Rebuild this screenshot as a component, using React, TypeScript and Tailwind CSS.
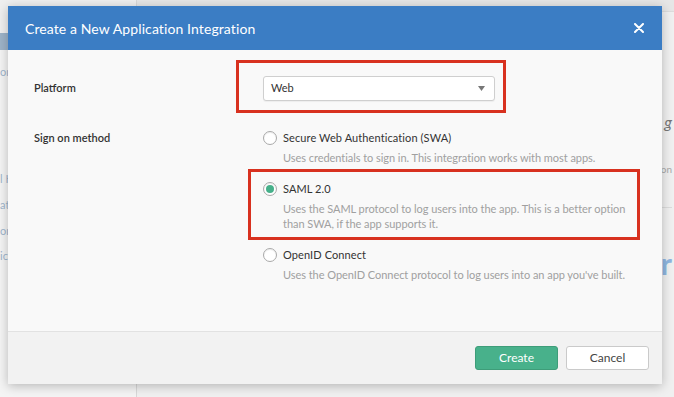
import React from "react";

function Radio({ checked }: { checked?: boolean }) {
  return (
    <span className="flex h-[14px] w-[14px] shrink-0 items-center justify-center rounded-full border border-[#a9a9a9] bg-white shadow-[inset_0_1px_1px_rgba(0,0,0,0.08)]">
      {checked ? <span className="h-[8px] w-[8px] rounded-full bg-[#46b08a]" /> : null}
    </span>
  );
}

function Option({
  checked,
  title,
  lines,
  last,
}: {
  checked?: boolean;
  title: string;
  lines: string[];
  last?: boolean;
}) {
  return (
    <div className={last ? "" : "mb-[15px]"}>
      <div className="flex h-[17px] items-center gap-[6px]">
        <Radio checked={checked} />
        <span className="text-[11px] leading-[17px] tracking-[0.1px] text-[#333]">{title}</span>
      </div>
      <div className="mt-[4px] pl-[20px] text-[11px] leading-[15px] tracking-[-0.05px] text-[#a0a0a0]">
        {lines.map((l) => (
          <div key={l}>{l}</div>
        ))}
      </div>
    </div>
  );
}

export default function App() {
  return (
    <div
      className="relative h-[397px] w-[674px] overflow-hidden bg-[#ececec]"
      style={{ fontFamily: "Lato, 'Open Sans', 'Liberation Sans', sans-serif" }}
    >
      {/* background page */}
      <div className="flex h-full">
        <div className="flex w-[137px] flex-col border-r border-[#d8d8d8] bg-[#f4f4f4]">
          <div className="h-[33px] bg-[#efefef]" />
          <div className="h-[17px] bg-[#9db3c8]" />
          <div className="mt-[14px] text-[11px] text-[#9fb4cc]">on</div>
          <div className="mt-[90px] text-[11px] text-[#9fb4cc]">l H</div>
          <div className="mt-[10px] text-[11px] text-[#9fb4cc]">at</div>
          <div className="mt-[9px] text-[11px] text-[#9fb4cc]">on</div>
          <div className="mt-[9px] text-[11px] text-[#9fb4cc]">ic</div>
        </div>
        <div className="flex flex-1 flex-col bg-[#f0f0f0]">
          <div className="h-[12px] border-b border-[#dcdcdc] bg-[#e6e6e6]" />
          <div className="flex flex-col items-end pr-[2px]">
            <div className="mt-[98px] text-[16px] italic text-[#777]">g</div>
            <div className="mt-[28px] text-[10px] text-[#aaa]">on</div>
            <div className="mt-[30px] h-px w-full bg-[#dcdcdc]" />
            <div className="mt-[40px] text-[30px] font-bold leading-none text-[#8fb6e0]">r</div>
          </div>
        </div>
      </div>

      {/* modal */}
      <div className="absolute left-[8px] top-[6px] flex h-[378px] w-[654px] flex-col bg-[#f9f9f9] shadow-[0_2px_10px_rgba(0,0,0,0.25)]">
        <div className="flex h-[44px] shrink-0 items-center justify-between bg-[#3b7dc4] pl-[17px] pr-[18px]">
          <span className="text-[14px] font-normal tracking-[0.1px] text-white">Create a New Application Integration</span>
          <svg width="10" height="10" viewBox="0 0 10 10">
            <path d="M1 1 L9 9 M9 1 L1 9" stroke="white" strokeWidth="2" strokeLinecap="round" />
          </svg>
        </div>

        <div className="flex-1 pl-[26px] pt-[26px]">
          <div className="grid grid-cols-[229px_1fr] items-center">
            <div className="text-[11px] font-semibold text-[#333]">Platform</div>
            <div className="flex h-[25px] w-[232px] items-center justify-between rounded-[3px] border border-[#cfcfcf] bg-white pl-[7px] pr-[9px] shadow-[0_1px_1px_rgba(0,0,0,0.05)]">
              <span className="text-[11px] text-[#333]">Web</span>
              <svg width="7" height="5" viewBox="0 0 7 5">
                <path d="M0 0 H7 L3.5 5 Z" fill="#777" />
              </svg>
            </div>
          </div>

          <div className="mt-[28px] grid grid-cols-[229px_1fr] items-start">
            <div className="text-[11px] font-semibold leading-[17px] text-[#333]">Sign on method</div>
            <div>
              <Option
                title="Secure Web Authentication (SWA)"
                lines={["Uses credentials to sign in. This integration works with most apps."]}
              />
              <Option
                checked
                title="SAML 2.0"
                lines={[
                  "Uses the SAML protocol to log users into the app. This is a better option",
                  "than SWA, if the app supports it.",
                ]}
              />
              <Option
                last
                title="OpenID Connect"
                lines={["Uses the OpenID Connect protocol to log users into an app you've built."]}
              />
            </div>
          </div>
        </div>

        <div className="flex h-[53px] shrink-0 items-center justify-end gap-[8px] border-t border-[#e2e2e2] bg-[#f2f2f2] pr-[13px]">
          <button className="h-[24px] w-[83px] rounded-[3px] border border-[#3e9d79] bg-[#48b18b] text-[12px] text-white">
            Create
          </button>
          <button className="h-[24px] w-[83px] rounded-[3px] border border-[#cacaca] bg-white text-[12px] text-[#444]">
            Cancel
          </button>
        </div>

        {/* annotation boxes */}
        <div className="pointer-events-none absolute left-[228px] top-[54px] h-[53px] w-[270px] border-[3px] border-[#d8311f]" />
        <div className="pointer-events-none absolute left-[240px] top-[163px] h-[71px] w-[392px] border-[3px] border-[#d8311f]" />
      </div>
    </div>
  );
}
